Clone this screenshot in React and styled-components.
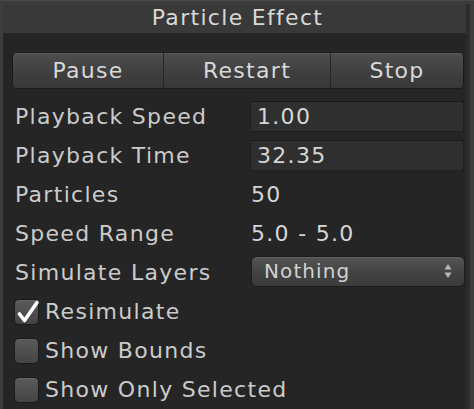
import styled, { createGlobalStyle } from 'styled-components'

const GlobalStyle = createGlobalStyle`
  html, body {
    margin: 0;
    padding: 0;
    background: #3c3c3c;
  }
  * {
    box-sizing: border-box;
  }
`

const Frame = styled.div`
  width: 474px;
  height: 409px;
  padding: 3px 4px 0 3px;
  background: #3d3d3d;
  border-top: 1px solid #474747;
  font-family: 'DejaVu Sans', Verdana, sans-serif;
  font-size: 22px;
  letter-spacing: 1.3px;
  color: #cbcbcb;
  overflow: hidden;
`

const Window = styled.div`
  height: 100%;
  display: flex;
  flex-direction: column;
  border-right: 4px solid #2c2c2c;
`

const Title = styled.div`
  height: 29px;
  line-height: 28px;
  padding-left: 6px;
  text-align: center;
  background: #393939;
  color: #d8d8d8;
`

const Body = styled.div`
  flex: 1;
  background: #252525;
  padding: 19px 2px 0 9px;
`

const ButtonBar = styled.div`
  display: flex;
  height: 37px;
  margin-bottom: 8px;
  border: 1px solid #1b1b1b;
  border-radius: 5px;
  overflow: hidden;
`

const Button = styled.div`
  width: ${(p) => p.$w}px;
  display: flex;
  align-items: center;
  justify-content: center;
  background: linear-gradient(#4e4e4e, #3e3e3e 60%, #383838);
  box-shadow: inset 0 1px 0 #5a5a5a;
  color: #d8d8d8;
  & + & {
    border-left: 1px solid #262626;
  }
  &:last-child {
    flex: 1;
  }
`

const Row = styled.div`
  display: grid;
  grid-template-columns: 238px 1fr;
  align-items: center;
  height: 39px;
`

const Label = styled.div`
  padding-left: 3px;
  white-space: nowrap;
`

const Field = styled.div`
  height: 31px;
  line-height: 30px;
  padding-left: 6px;
  background: #2f2f2f;
  border: 1px solid #1e1e1e;
  border-top-color: #191919;
  color: #d6d6d6;
`

const Value = styled.div`
  padding-left: 1px;
  color: #d6d6d6;
`

const Dropdown = styled.div`
  display: flex;
  align-items: center;
  justify-content: space-between;
  height: 31px;
  margin: -3px -1px 0 1px;
  padding: 0 12px;
  border: 1px solid #1c1c1c;
  border-radius: 6px;
  background: linear-gradient(#555555, #434343 55%, #3b3b3b);
  box-shadow: inset 0 1px 0 #616161;
  color: #d2d2d2;
  font-size: 20px;
  letter-spacing: 1.1px;
`

const Toggle = styled.div`
  display: flex;
  align-items: center;
  height: 39px;
  padding-left: 2px;
`

const Box = styled.span`
  position: relative;
  width: 25px;
  height: 26px;
  margin-right: 6px;
  border: 1px solid #1a1a1a;
  border-radius: 5px;
  background: linear-gradient(#5a5a5a, #444444);
  box-shadow: inset 0 1px 0 #666666;
  flex-shrink: 0;
`

const Check = styled.svg`
  position: absolute;
  left: -1px;
  top: -1px;
`

function Arrows() {
  return (
    <svg width="8" height="16" viewBox="0 0 8 16">
      <path d="M4 1 L7.5 6.5 H0.5 Z" fill="#b9b9b9" />
      <path d="M4 15 L7.5 9.5 H0.5 Z" fill="#b9b9b9" />
    </svg>
  )
}

function Checkbox({ checked, label }) {
  return (
    <Toggle>
      <Box>
        {checked && (
          <Check width="26" height="26" viewBox="0 0 26 26">
            <path
              d="M5.5 15 L10.5 21.5 L23 3.5"
              fill="none"
              stroke="#ffffff"
              strokeWidth="3.6"
              strokeLinecap="round"
              strokeLinejoin="round"
            />
          </Check>
        )}
      </Box>
      {label}
    </Toggle>
  )
}

export default function App() {
  return (
    <>
      <GlobalStyle />
      <Frame>
        <Window>
          <Title>Particle Effect</Title>
          <Body>
            <ButtonBar>
              <Button $w={150}>Pause</Button>
              <Button $w={167}>Restart</Button>
              <Button>Stop</Button>
            </ButtonBar>
            <Row>
              <Label>Playback Speed</Label>
              <Field>1.00</Field>
            </Row>
            <Row>
              <Label>Playback Time</Label>
              <Field>32.35</Field>
            </Row>
            <Row>
              <Label>Particles</Label>
              <Value>50</Value>
            </Row>
            <Row>
              <Label>Speed Range</Label>
              <Value>5.0 - 5.0</Value>
            </Row>
            <Row>
              <Label>Simulate Layers</Label>
              <Dropdown>
                Nothing
                <Arrows />
              </Dropdown>
            </Row>
            <Checkbox checked label="Resimulate" />
            <Checkbox label="Show Bounds" />
            <Checkbox label="Show Only Selected" />
          </Body>
        </Window>
      </Frame>
    </>
  )
}
